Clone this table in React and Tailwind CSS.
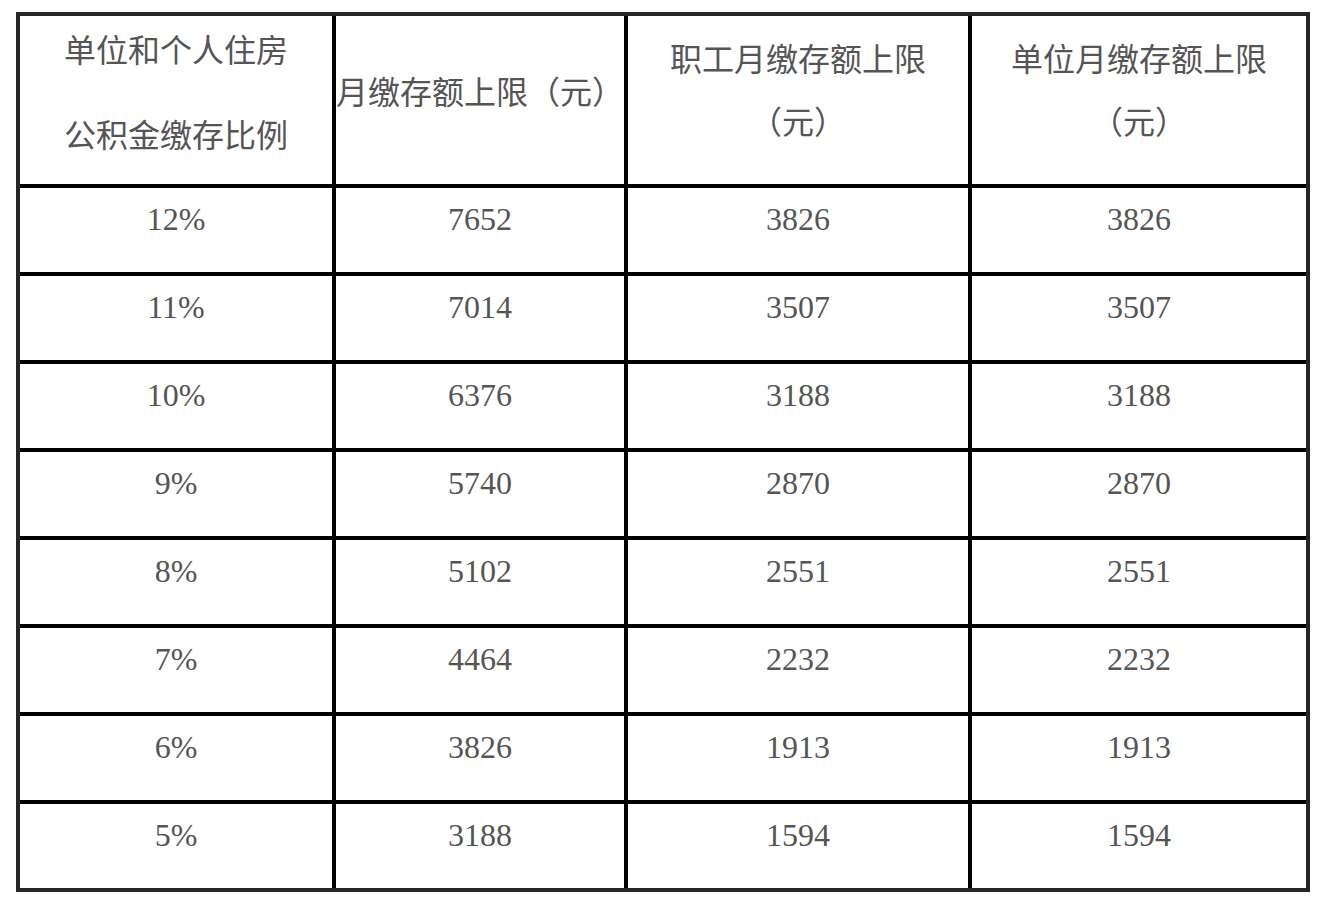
const rows = [
  ["12%", "7652", "3826", "3826"],
  ["11%", "7014", "3507", "3507"],
  ["10%", "6376", "3188", "3188"],
  ["9%", "5740", "2870", "2870"],
  ["8%", "5102", "2551", "2551"],
  ["7%", "4464", "2232", "2232"],
  ["6%", "3826", "1913", "1913"],
  ["5%", "3188", "1594", "1594"],
];

const font = {
  fontFamily: '"Liberation Serif", "Noto Sans CJK SC", serif',
};

export default function App() {
  return (
    <div className="w-[1326px] h-[902px] bg-white pt-[12px] pl-[16px]" style={font}>
      <div className="inline-grid grid-cols-[312px_288px_340px_334px] grid-rows-[168px_repeat(8,84px)] gap-[4px] bg-black border-4 border-[#262626] text-[32px] leading-[46px] text-[#555555]">
        {/* header */}
        <div className="bg-white flex flex-col items-center pt-[12px] gap-[39px]">
          <div>单位和个人住房</div>
          <div>公积金缴存比例</div>
        </div>
        <div className="bg-white flex flex-col items-center pt-[54px] whitespace-nowrap">
          <div>月缴存额上限（元）</div>
        </div>
        <div className="bg-white flex flex-col items-center pt-[21px] gap-[17px]">
          <div>职工月缴存额上限</div>
          <div>（元）</div>
        </div>
        <div className="bg-white flex flex-col items-center pt-[21px] gap-[17px]">
          <div>单位月缴存额上限</div>
          <div>（元）</div>
        </div>

        {rows.map((r, i) =>
          r.map((c, j) => (
            <div key={i + "-" + j} className="bg-white text-center pt-[8px]">
              {c}
            </div>
          ))
        )}
      </div>
    </div>
  );
}
